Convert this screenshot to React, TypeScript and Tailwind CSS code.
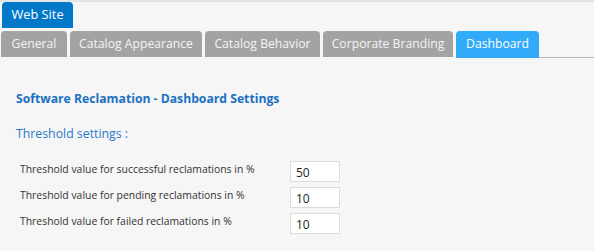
import React from "react";

const font = { fontFamily: '"Open Sans", "Liberation Sans", sans-serif' };

export default function App() {
  const tabs = [
    { label: "General", w: "w-[66px]" },
    { label: "Catalog Appearance", w: "w-[132px]" },
    { label: "Catalog Behavior", w: "w-[115px]" },
    { label: "Corporate Branding", w: "w-[130px]" },
  ];
  const rows = [
    { label: "Threshold value for successful reclamations in %", value: "50" },
    { label: "Threshold value for pending reclamations in %", value: "10" },
    { label: "Threshold value for failed reclamations in %", value: "10" },
  ];
  return (
    <div
      className="w-[594px] h-[251px] bg-[#f6f6f6] border-t-[2px] border-[#e4e4e4] overflow-hidden"
      style={font}
    >
      <div className="flex pl-[2px]">
        <div className="h-[26px] w-[71px] flex items-center justify-center bg-[#0078c9] text-white text-[12.8px] rounded-t-[4px]">
          Web Site
        </div>
      </div>
      <div className="flex mt-[3px] pl-[1px] gap-[3px] h-[27px]">
        {tabs.map((t) => (
          <div
            key={t.label}
            className={`${t.w} h-[26px] flex items-center justify-center bg-[#a3a3a3] text-[#f4f4f4] text-[12.2px] rounded-t-[4px]`}
          >
            {t.label}
          </div>
        ))}
        <div className="w-[83px] h-[27px] flex items-center justify-center bg-[#30aaf9] text-white text-[12.2px] rounded-t-[4px]">
          Dashboard
        </div>
        <div className="flex-1 h-[27px] border-b border-[#b8b8b8] -ml-[3px]" />
      </div>
      <div className="pl-[16px] pt-[33px]">
        <div className="text-[12.2px] font-bold text-[#1a70c2] leading-[16px]">
          Software Reclamation - Dashboard Settings
        </div>
        <div className="mt-[18px] text-[12.3px] text-[#2a78c8] leading-[18px]">
          Threshold settings :
        </div>
        <div className="mt-[18px] pl-[4px] flex flex-col gap-[5px]">
          {rows.map((r) => (
            <div key={r.label} className="flex items-center h-[21px]">
              <div className="w-[270px] text-[10.4px] text-[#333333] -mt-[4px]">{r.label}</div>
              <input
                readOnly
                value={r.value}
                className="w-[50px] h-[21px] bg-white border border-[#dcdcdc] px-[5px] pt-[2px] text-[12px] text-[#222] outline-none"
                style={font}
              />
            </div>
          ))}
        </div>
      </div>
    </div>
  );
}
